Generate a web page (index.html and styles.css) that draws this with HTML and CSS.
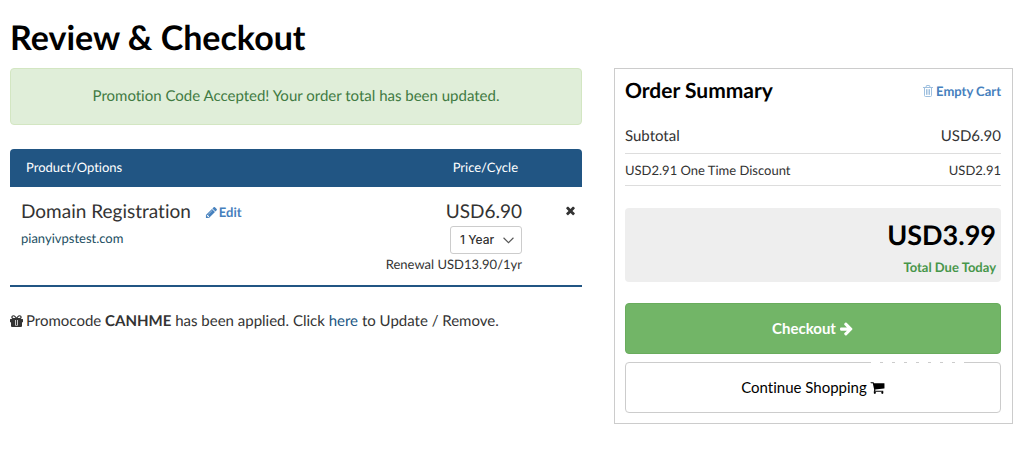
FILE: index.html
```html
<!DOCTYPE html>
<html lang="en">
<head>
<meta charset="utf-8">
<meta name="viewport" content="width=device-width, initial-scale=1">
<title>Review &amp; Checkout</title>
<link rel="stylesheet" href="styles.css">
</head>
<body>
<main class="page">
  <h1 class="page-title">Review &amp; Checkout</h1>
  <div class="columns">
    <section class="cart">
      <div class="alert" role="status">Promotion Code Accepted! Your order total has been updated.</div>
      <table class="items">
        <thead>
          <tr>
            <th class="col-product" scope="col">Product/Options</th>
            <th class="col-price" scope="col">Price/Cycle</th>
            <td class="col-remove"></td>
          </tr>
        </thead>
        <tbody>
          <tr>
            <td class="col-product">
              <div class="item-head">
                <span class="item-name">Domain Registration</span>
                <a class="action" href="#"><svg class="icon icon-sm" viewBox="0 0 1792 1792" aria-hidden="true"><path d="M491 1536l91-91-235-235-91 91v107h128v128h107zm523-928q0-22-22-22-10 0-17 7l-542 542q-7 7-7 17 0 22 22 22 10 0 17-7l542-542q7-7 7-17zm-54-192l416 416-832 832h-416v-416zm683 96q0 53-37 90l-166 166-416-416 166-165q36-38 90-38 53 0 91 38l235 234q37 39 37 91z"/></svg>Edit</a>
              </div>
              <div class="item-domain">pianyivpstest.com</div>
            </td>
            <td class="col-price">
              <div class="item-price">USD6.90</div>
              <div class="cycle">
                <select class="cycle-select" aria-label="Billing cycle"><option>1 Year</option></select>
                <svg class="cycle-arrow" viewBox="0 0 10 6" aria-hidden="true"><path d="M.5.5 5 5 9.500.5"/></svg>
              </div>
              <div class="item-renewal">Renewal USD13.90/1yr</div>
            </td>
            <td class="col-remove">
              <button class="remove" type="button" aria-label="Remove"><svg class="icon icon-sm" viewBox="0 0 1792 1792" aria-hidden="true"><path d="M1490 1322q0 40-28 68l-136 136q-28 28-68 28t-68-28l-294-294-294 294q-28 28-68 28t-68-28l-136-136q-28-28-28-68t28-68l294-294-294-294q-28-28-28-68t28-68l136-136q28-28 68-28t68 28l294 294 294-294q28-28 68-28t68 28l136 136q28 28 28 68t-28 68l-294 294 294 294q28 28 28 68z"/></svg></button>
            </td>
          </tr>
        </tbody>
      </table>
      <p class="promo"><svg class="icon icon-gift" viewBox="0 0 13 12" aria-hidden="true"><path fill-rule="evenodd" d="M0 4.500Q0 4 .5 4H3.500C1.800 4 1.300 3 1.300 2.200 1.300 1 2.200.2 3.400.2 4.300.2 5 .6 5.500 1.300L6.500 2.600 7.500 1.300C8 .6 8.700.2 9.600.2 10.800.2 11.700 1 11.700 2.200 11.700 3 11.200 4 9.500 4H12.500Q13 4 13 4.500V7Q13 7.300 12.700 7.300H12V11Q12 12 11 12H2Q1 12 1 11V7.300H.3Q0 7.300 0 7ZM3.500 1.300C2.200 1.300 2.200 3.100 3.500 3.100H5.500L4.400 1.700Q4 1.300 3.500 1.300ZM9.500 1.300Q9 1.300 8.600 1.700L7.500 3.100H9.500C10.800 3.100 10.800 1.300 9.500 1.300ZM5.100 5V10.500H7.900V5Z"/><path d="M5.800 4H7.200V10H5.800Z"/></svg>Promocode <strong>CANHME</strong> has been applied. Click <a class="promo-link" href="#">here</a> to Update / Remove.</p>
    </section>

    <aside class="summary">
      <div class="summary-head">
        <h2 class="summary-title">Order Summary</h2>
        <a class="action" href="#"><svg class="icon icon-trash" viewBox="0 0 10 12" aria-hidden="true"><path d="M3.200 2V1Q3.200.5 3.800.5H6.200Q6.800.5 6.800 1V2M0 2.500H10M1.500 2.500V10.500Q1.500 11.500 2.500 11.500H7.500Q8.500 11.500 8.500 10.500V2.500M3.500 4.200V9.800M5 4.200V9.800M6.500 4.200V9.800"/></svg>Empty Cart</a>
      </div>
      <dl class="lines">
        <div class="line"><dt>Subtotal</dt><dd>USD6.90</dd></div>
        <div class="line line-small"><dt>USD2.91 One Time Discount</dt><dd>USD2.91</dd></div>
      </dl>
      <div class="total">
        <div class="total-amount">USD3.99</div>
        <div class="total-label">Total Due Today</div>
      </div>
      <div class="buttons">
        <button class="btn btn-primary" type="button">Checkout<svg class="icon" viewBox="0 0 1792 1792" aria-hidden="true"><path d="M1600 960q0 54-37 91l-651 651q-39 37-91 37-51 0-90-37l-75-75q-38-38-38-91t38-91l293-293h-704q-52 0-84.500-37.500t-32.500-90.500v-128q0-53 32.500-90.500t84.500-37.500h704l-293-294q-38-36-38-90t38-90l75-75q38-38 90-38 53 0 91 38l651 651q37 35 37 90z"/></svg></button>
        <button class="btn btn-secondary" type="button">Continue Shopping<svg class="icon" viewBox="0 0 1792 1792" aria-hidden="true"><path d="M704 1536q0 52-38 90t-90 38-90-38-38-90 38-90 90-38 90 38 38 90zm896 0q0 52-38 90t-90 38-90-38-38-90 38-90 90-38 90 38 38 90zm128-1088v512q0 24-16.500 42.500t-40.500 21.500l-1044 122q13 60 13 70 0 16-24 64h920q26 0 45 19t19 45-19 45-45 19h-1024q-26 0-45-19t-19-45q0-11 8-31.500t16-36 21.500-40 15.500-29.500l-177-823h-204q-26 0-45-19t-19-45 19-45 45-19h256q16 0 28.500 6.500t19.500 15.500 13 24.500 8 26 5.500 29.500 4.500 26h1201q26 0 45 19t19 45z"/></svg></button>
      </div>
    </aside>
  </div>
</main>
</body>
</html>
```
FILE: styles.css
```css
* { box-sizing: border-box; }

body {
  margin: 0;
  background: #fff;
  color: #333;
  font-family: Lato, "Liberation Sans", sans-serif;
  font-size: 15px;
  font-variant-ligatures: none;
  line-height: 20px;
  text-rendering: geometricPrecision;
}

a { text-decoration: none; }

.page { padding: 16px 11px 24px 10px; }

.page-title {
  margin: 0 0 8px;
  color: #000;
  font-size: 34px;
  font-weight: 700;
  line-height: 44px;
}

.columns {
  display: grid;
  grid-template-columns: 572fr 399fr;
  gap: 32px;
  align-items: start;
}

.icon {
  width: 15px;
  height: 15px;
  fill: currentColor;
  flex: none;
}

.icon-sm { width: 13px; height: 13px; }

.alert {
  padding: 17px 16px 18px;
  border: 1px solid #d3e6c2;
  border-radius: 4px;
  background: #e0eed9;
  color: #3f7a42;
  text-align: center;
}

.items {
  width: 100%;
  margin-top: 24px;
  border-collapse: separate;
  border-spacing: 0;
  border-bottom: 2px solid #215583;
}

.items thead th,
.items thead td {
  padding: 8px 4px 10px 16px;
  background: #215583;
  color: #fff;
  font-size: 13px;
  font-weight: 400;
}

.items thead .col-product { border-top-left-radius: 4px; text-align: left; }
.items thead .col-remove { border-top-right-radius: 4px; }

.items tbody td {
  padding: 13px 0 11px;
  vertical-align: top;
}

.items tbody .col-product { padding-left: 11px; }

.col-price { text-align: right; }
.col-remove { width: 60px; text-align: right; }

.item-head {
  display: flex;
  align-items: center;
  gap: 14px;
}

.item-name,
.item-price {
  font-size: 19px;
  line-height: 24px;
}

.item-domain {
  margin-top: 4px;
  color: #1d5063;
  font-size: 13px;
}

.cycle {
  position: relative;
  display: inline-block;
  margin-top: 2px;
  vertical-align: top;
}

.cycle-select {
  appearance: none;
  display: block;
  width: 72px;
  height: 28px;
  padding: 0 9px;
  border: 1px solid #ccc;
  border-radius: 3px;
  background: #fff;
  color: #333;
  font: 500 12px/20px Inter, "Liberation Sans", sans-serif;
}

.cycle-arrow {
  position: absolute;
  top: 11px;
  right: 8px;
  width: 11px;
  height: 7px;
  fill: none;
  stroke: #555;
  pointer-events: none;
}

.item-renewal { font-size: 13px; }

.remove {
  display: inline-flex;
  margin: 4px 5px 0 0;
  padding: 0;
  border: 0;
  background: none;
  color: #333;
}

.promo { margin: 24px 0 0; }
.promo-link { color: #215583; }

.icon-gift {
  width: 13px;
  height: 12px;
  margin-right: 3px;
  vertical-align: -1px;
}

.action {
  display: flex;
  align-items: center;
  gap: 1px;
  color: #4680bd;
  font-size: 13px;
  font-weight: 700;
}

.icon-trash {
  width: 10px;
  height: 12px;
  margin-right: 2px;
  fill: none;
  stroke: #9fc0df;
}

.summary {
  padding: 9px 11px 10px 10px;
  border: 1px solid #ccc;
}

.summary-head {
  display: flex;
  align-items: center;
  justify-content: space-between;
}

.summary-title {
  margin: 0;
  color: #000;
  font-size: 21px;
  font-weight: 700;
  line-height: 26px;
}

.lines { margin: 17px 0 22px; }

.line {
  display: flex;
  justify-content: space-between;
  padding: 5px 0 7px;
  border-bottom: 1px solid #ddd;
}

.line dd { margin: 0; }
.line-small { padding-top: 6px; padding-bottom: 5px; font-size: 13px; }

.total {
  padding: 10px 5px 5px;
  border-radius: 4px;
  background: #eee;
  text-align: right;
}

.total-amount {
  color: #000;
  font-size: 27px;
  font-weight: 700;
  line-height: 34px;
}

.total-label {
  margin-top: 5px;
  color: #47964a;
  font-size: 13px;
  font-weight: 700;
}

.buttons {
  display: grid;
  gap: 8px;
  margin-top: 21px;
}

.btn {
  display: flex;
  align-items: center;
  justify-content: center;
  gap: 3px;
  padding: 14px 16px 15px;
  border: 1px solid #ccc;
  border-radius: 4px;
  background: #fff;
  color: #000;
  font: inherit;
}

.btn-primary {
  border-color: #69ac5d;
  background: #72b567;
  color: #fff;
  font-weight: 700;
}

.btn-secondary { position: relative; }

/* Broken stretch in the top edge */
.btn-secondary::before {
  content: "";
  position: absolute;
  top: -1px;
  right: 33px;
  width: 96px;
  height: 1px;
  background: repeating-linear-gradient(90deg, #fff 0 9px, #ccc 9px 12px);
}
```
